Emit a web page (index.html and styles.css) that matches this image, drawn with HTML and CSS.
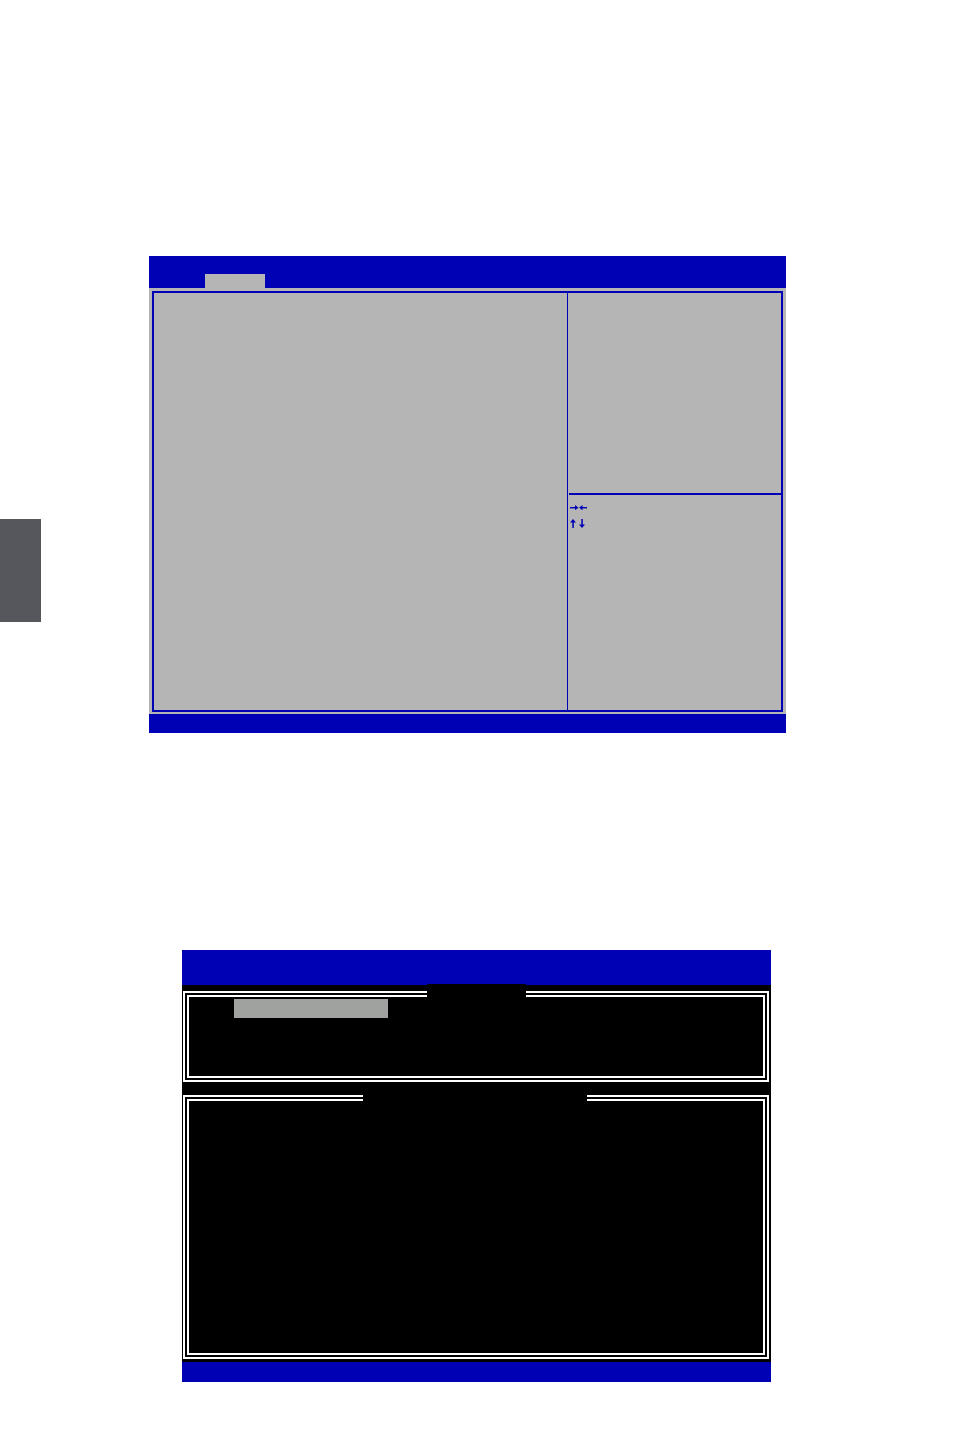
FILE: index.html
```html
<!DOCTYPE html>
<html lang="en">
<head>
    <meta charset="UTF-8">
    <meta name="viewport" content="width=device-width, initial-scale=1.0">
    <title>BIOS Setup</title>
<link rel="stylesheet" href="styles.css">
</head>
<body>
<div class="thumb-tab"></div>

<div class="page">
    <!-- setup utility screen -->
    <div class="setup">
        <div class="setup-head">
            <div class="menu-tab"></div>
        </div>
        <div class="setup-body">
            <div class="frame">
                <div class="items"></div>
                <div class="help">
                    <div class="help-text"></div>
                    <div class="help-keys">
                        <svg class="key" width="17" height="5" viewBox="0 0 17 5">
                            <rect x="0" y="2" width="6" height="1.4" fill="#0000b4"/>
                            <polygon points="5,0 8.5,2.7 5,5.2" fill="#0000b4"/>
                            <polygon points="12.5,0 9,2.7 12.5,5.2" fill="#0000b4"/>
                            <rect x="11.5" y="2" width="5.5" height="1.4" fill="#0000b4"/>
                        </svg>
                        <svg class="key" width="17" height="9" viewBox="0 0 17 9">
                            <polygon points="3,0 6,3.5 0,3.5" fill="#0000b4"/>
                            <rect x="2.3" y="3" width="1.5" height="6" fill="#0000b4"/>
                            <rect x="11.3" y="0" width="1.5" height="6" fill="#0000b4"/>
                            <polygon points="12,9 15,5.5 9,5.5" fill="#0000b4"/>
                        </svg>
                    </div>
                </div>
            </div>
        </div>
        <div class="setup-foot"></div>
    </div>

    <!-- raid configuration screen -->
    <div class="raid">
        <div class="raid-head"></div>
        <div class="raid-body">
            <div class="box box-main">
                <span class="box-title title-main"></span>
                <div class="choice"></div>
            </div>
            <div class="box box-list">
                <span class="box-title title-list"></span>
            </div>
        </div>
        <div class="raid-foot"></div>
    </div>
</div>
</body>
</html>
```

FILE: styles.css
```css
html, body {margin: 0;padding: 0;background: #fff;font-family: "Liberation Sans", Arial, sans-serif;}

.thumb-tab {position: absolute;left: 0;top: 519px;width: 41px;height: 103px;background: #55575c;}

.page {padding-top: 256px;display: flex;flex-direction: column;}

/* setup screen */
.setup {margin-left: 149px;width: 637px;display: flex;flex-direction: column;}
.setup-head {height: 32px;background: #0000b4;display: flex;align-items: flex-end;}
.menu-tab {margin-left: 56px;width: 60px;height: 14px;background: #b4b5b4;}
.setup-body {background: #b4b5b4;padding: 3px 3px 2px 3px;}
.frame {border: 2px solid #0000b4;height: 417px;display: flex;}
.items {width: 413px;border-right: 1px solid #0000b4;}
.help {flex: 1;display: flex;flex-direction: column;}
.help-text {height: 200px;}
.help-keys {margin-left: 1px;border-top: 2px solid #0000b4;padding: 10px 0 0 1px;display: flex;flex-direction: column;gap: 9px;}
.key {display: block;}
.setup-foot {height: 19px;background: #0000b4;}

/* raid screen */
.raid {margin: 217px 0 0 182px;width: 589px;display: flex;flex-direction: column;}
.raid-head {height: 35px;background: #0000b4;}
.raid-body {background: #000;padding: 6px 2px 3px 1px;display: flex;flex-direction: column;gap: 13px;}
.box {position: relative;border: 6px double #fff;box-sizing: border-box;}
.box-main {height: 91px;padding: 2px 0 0 45px;}
.box-list {height: 264px;}
.box-title {position: absolute;background: #000;}
.title-main {left: 238px;top: -13px;width: 99px;height: 13px;}
.title-list {left: 174px;top: -7px;width: 224px;height: 8px;}
.choice {width: 154px;height: 19px;background: #a0a2a0;}
.raid-foot {height: 20px;background: #0000b4;}
```
